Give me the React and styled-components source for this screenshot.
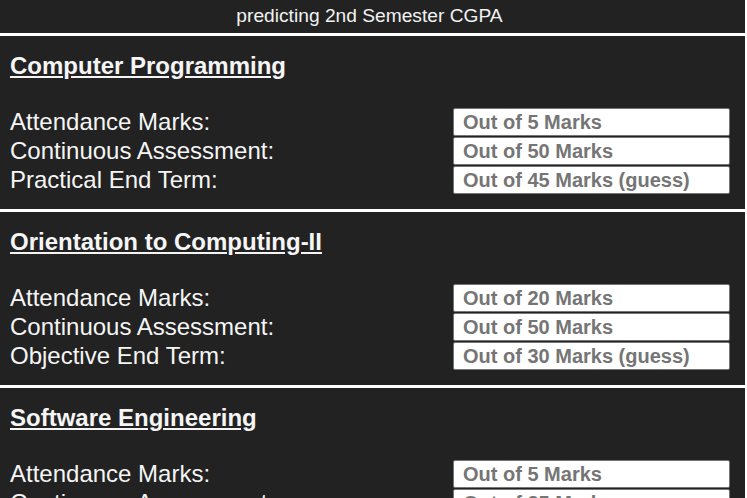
import React from "react";
import styled, { createGlobalStyle } from "styled-components";

const Global = createGlobalStyle`
  html, body { margin: 0; padding: 0; background: #ffffff; }
  body { font-family: "Liberation Sans", Arial, sans-serif; }
`;

const Page = styled.div`
  width: 745px;
  display: flex;
  flex-direction: column;
  gap: 3px;
`;

const Header = styled.header`
  background: #222222;
  color: #f2f2f2;
  height: 33px;
  display: flex;
  align-items: center;
  justify-content: center;
  font-size: 19.2px;
  padding: 0 6px 1px 0;
  box-sizing: border-box;
`;

const Panel = styled.section`
  background: #222222;
  color: #f5f5f5;
  padding: 16px 15px 15px 10px;
`;

const Title = styled.h2`
  margin: 0 0 28px;
  font-size: 24px;
  line-height: 28px;
  font-weight: bold;
  text-decoration: underline;
  text-underline-offset: 2px;
`;

const Rows = styled.div`
  display: grid;
  grid-template-columns: 1fr 277px;
  row-gap: 1px;
`;

const Label = styled.label`
  font-size: 24px;
  line-height: 28px;
  height: 28px;
  white-space: nowrap;
`;

const Field = styled.input`
  box-sizing: border-box;
  height: 28px;
  width: 277px;
  border: 1px solid #767676;
  border-radius: 2px;
  background: #ffffff;
  padding: 0 9px;
  font-family: "Liberation Sans", Arial, sans-serif;
  font-size: 20px;
  font-weight: bold;
  color: #222;
  outline: none;
  &::placeholder { color: #757575; opacity: 1; }
`;

const subjects = [
  {
    name: "Computer Programming",
    rows: [
      ["Attendance Marks:", "Out of 5 Marks"],
      ["Continuous Assessment:", "Out of 50 Marks"],
      ["Practical End Term:", "Out of 45 Marks (guess)"],
    ],
  },
  {
    name: "Orientation to Computing-II",
    rows: [
      ["Attendance Marks:", "Out of 20 Marks"],
      ["Continuous Assessment:", "Out of 50 Marks"],
      ["Objective End Term:", "Out of 30 Marks (guess)"],
    ],
  },
  {
    name: "Software Engineering",
    rows: [
      ["Attendance Marks:", "Out of 5 Marks"],
      ["Continuous Assessment:", "Out of 25 Marks"],
      ["Objective End Term:", "Out of 70 Marks (guess)"],
    ],
  },
];

export default function App() {
  return (
    <>
      <Global />
      <Page>
        <Header>predicting 2nd Semester CGPA</Header>
        {subjects.map((s) => (
          <Panel key={s.name}>
            <Title>{s.name}</Title>
            <Rows>
              {s.rows.map(([label, ph]) => (
                <React.Fragment key={label}>
                  <Label>{label}</Label>
                  <Field type="text" placeholder={ph} />
                </React.Fragment>
              ))}
            </Rows>
          </Panel>
        ))}
      </Page>
    </>
  );
}
